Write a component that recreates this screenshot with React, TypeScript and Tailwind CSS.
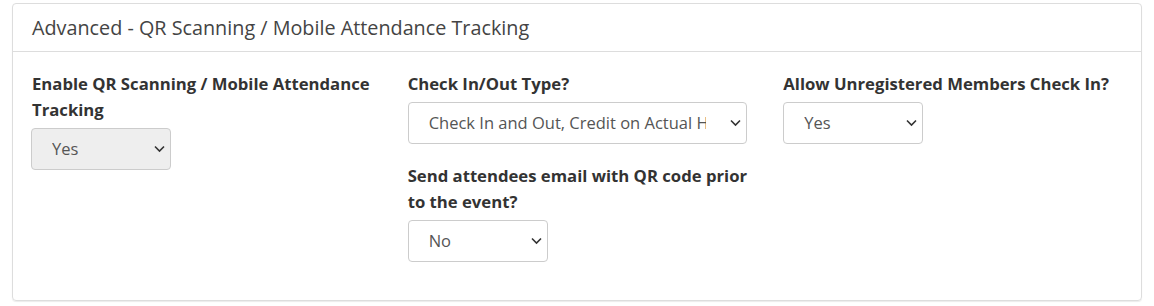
import React from "react";

const Chevron = () => (
  <svg
    className="pointer-events-none absolute right-[6px] top-1/2 -translate-y-1/2 text-[#333]"
    width="11"
    height="7"
    viewBox="0 0 11 7"
    fill="none"
  >
    <path d="M1 1l4.5 4.5L10 1" stroke="currentColor" strokeWidth="1.6" />
  </svg>
);

const Select = ({
  options,
  width,
  disabled,
}: {
  options: string[];
  width: string;
  disabled?: boolean;
}) => (
  <div className={`relative ${width}`}>
    <select
      disabled={disabled}
      defaultValue={options[0]}
      className={`h-[42px] w-full appearance-none rounded-[4px] border border-[#ccc] pl-[20px] pr-[40px] text-[16.5px] text-[#555] outline-none ${
        disabled ? "bg-[#eee]" : "bg-white"
      }`}
    >
      {options.map((o) => (
        <option key={o}>{o}</option>
      ))}
    </select>
    <Chevron />
  </div>
);

const Label = ({ children }: { children: React.ReactNode }) => (
  <label className="mb-[5px] block text-[16.7px] font-bold leading-[26px] text-[#333]">
    {children}
  </label>
);

export default function App() {
  return (
    <div
      className="min-h-[306px] bg-white px-[12px] pt-[3px]"
      style={{ fontFamily: '"Open Sans", "Noto Sans", sans-serif' }}
    >
      <div className="rounded-[4px] border border-[#ddd] shadow-[0_1px_1px_rgba(0,0,0,0.08)]">
        <div className="flex h-[48px] items-center border-b border-[#ddd] px-[19px] text-[19.8px] text-[#444]">
          Advanced - QR Scanning / Mobile Attendance Tracking
        </div>
        <div className="flex pb-[38px] pl-[18px] pr-[19px] pt-[19px]">
          <div className="w-[378px] pl-[1px] pr-[15px]">
            <Label>
              Enable QR Scanning / Mobile Attendance
              <br />
              Tracking
            </Label>
            <div className="-ml-[1px]">
              <Select options={["Yes", "No"]} width="w-[140px]" disabled />
            </div>
          </div>
          <div className="w-[377px] pr-[15px]">
            <Label>Check In/Out Type?</Label>
            <Select
              options={["Check In and Out, Credit on Actual Hours", "Check In Only"]}
              width="w-[339px]"
            />
            <div className="mt-[19px]">
              <Label>
                Send attendees email with QR code prior
                <br />
                to the event?
              </Label>
              <Select options={["No", "Yes"]} width="w-[140px]" />
            </div>
          </div>
          <div className="w-[340px]">
            <Label>Allow Unregistered Members Check In?</Label>
            <Select options={["Yes", "No"]} width="w-[140px]" />
          </div>
        </div>
      </div>
    </div>
  );
}
